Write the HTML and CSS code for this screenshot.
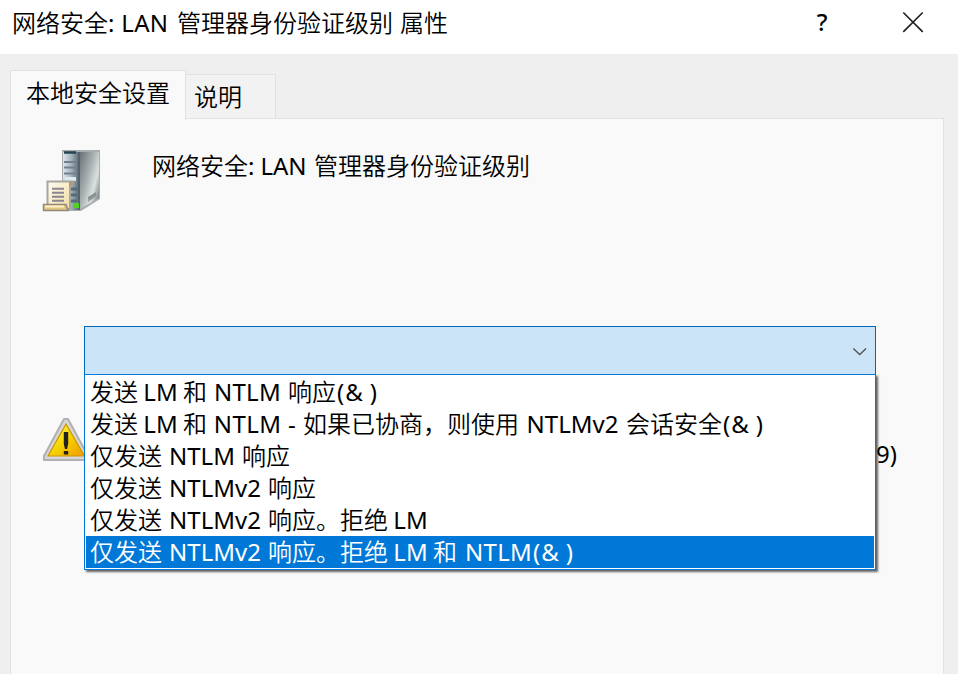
FILE: index.html
```html
<!DOCTYPE html>
<html lang="zh-CN">
<head>
<meta charset="utf-8">
<title>网络安全: LAN 管理器身份验证级别 属性</title>
<link rel="stylesheet" href="styles.css">
</head>
<body>
<div class="dialog">
  <header class="titlebar">
    <h1 class="title">网络安全<span class="run lan-title">: LAN </span>管理器身份验证级别<span class="run gap"> </span>属性</h1>
    <button class="help" aria-label="帮助">?</button>
    <button class="close" aria-label="关闭"><svg width="22" height="22" viewBox="0 0 22 22"><path d="M1.3 1.5 20.7 20.9M20.7 1.5 1.3 20.9" stroke="#222" stroke-width="1.7" fill="none"/></svg></button>
  </header>
  <nav class="tabs">
    <div class="tab active">本地安全设置</div>
    <div class="tab">说明</div>
  </nav>
  <main class="panel">
    <div class="policy">
      <svg class="server" width="60" height="64" viewBox="0 0 60 64">
        <defs>
          <linearGradient id="side" x1="0" y1="0" x2="1" y2=".8"><stop offset="0" stop-color="#697277"/><stop offset=".45" stop-color="#a8afb1"/><stop offset=".75" stop-color="#dce0e0"/><stop offset="1" stop-color="#7d8588"/></linearGradient>
          <linearGradient id="front" x1="0" y1="0" x2="1" y2="0"><stop offset="0" stop-color="#dce5ea"/><stop offset=".5" stop-color="#aab8c2"/><stop offset="1" stop-color="#627480"/></linearGradient>
          <linearGradient id="paper" x1="0" y1="0" x2="1" y2="1"><stop offset="0" stop-color="#fffdf2"/><stop offset="1" stop-color="#efd99c"/></linearGradient>
        </defs>
        <path d="M20 1H58V50L39 62H20Z" fill="#a8adaf"/>
        <path d="M38 3H57V49L38 60Z" fill="url(#side)"/>
        <path d="M21 3H36V61H21Z" fill="url(#front)"/>
        <path d="M37 3V61" stroke="#55626a" stroke-width="2"/>
        <path d="M22 3.5H34" stroke="#234353" stroke-width="2.5"/>
        <path d="M22 13H35M22 18.5H35M22 24.5H35" stroke="#71818b" stroke-width="2"/>
        <path d="M23 28H34V32H23Z" fill="#dceaf1"/>
        <path d="M28 40H35M28 46H35M28 52H35" stroke="#526c7b" stroke-width="3"/>
        <path d="M46 52 54 43V47L46 53ZM46 48 54 43V46L46 51Z" fill="#8b9293"/>
        <path d="M32 54H37V59H32Z" fill="#4ed321"/>
        <path d="M5.500 32.5H31L28 39V60H5.500Z" fill="url(#paper)" stroke="#a6a5a0" stroke-width="2"/>
        <path d="M27 33H30.500L28.500 38H27Z" fill="#bd9b5d"/>
        <path d="M10 39.800H22M10 43.800H22M10 47.800H22M10 51.800H22" stroke="#8b8591" stroke-width="2"/>
        <path d="M1.500 55.500H24L26 61.500H1.500Z" fill="#dfc681" stroke="#918a7c" stroke-width="1.5"/>
        <path d="M3 57.500H22" stroke="#fff0ca" stroke-width="2"/>
      </svg>
      <div class="policy-name">网络安全<span class="run lan-name">: LAN </span>管理器身份验证级别</div>
    </div>
    <div class="combo">
      <svg width="16" height="10" viewBox="0 0 16 10"><path d="m1.3 1.5 6.4 6 6.4-6" fill="none" stroke="#505050" stroke-width="1.3"/></svg>
      <ul class="list">
        <li>发送<span class="run w45">LM</span>和<span class="run w81">NTLM</span>响应<span class="run amp">(<i>&amp;</i>)</span></li>
        <li>发送<span class="run w45">LM</span>和<span class="run w96">NTLM -</span>如果已协商，则使用<span class="run w107">NTLMv2</span>会话安全<span class="run amp">(<i>&amp;</i>)</span></li>
        <li>仅发送<span class="run w80">NTLM</span>响应</li>
        <li>仅发送<span class="run w106">NTLMv2</span>响应</li>
        <li>仅发送<span class="run w106">NTLMv2</span>响应。拒绝<span class="run w45">LM</span></li>
        <li class="selected">仅发送<span class="run w106">NTLMv2</span>响应。拒绝<span class="run w45">LM</span>和<span class="run w75">NTLM</span><span class="run amp">(<i>&amp;</i>)</span></li>
      </ul>
    </div>
    <div class="notice">
      <svg width="48" height="46" viewBox="0 0 48 46">
        <defs><linearGradient id="gold" x1="0" y1="0" x2="1" y2="1"><stop offset=".15" stop-color="#fff04b"/><stop offset=".5" stop-color="#f5d400"/><stop offset="1" stop-color="#f09a00"/></linearGradient></defs>
        <path d="M22 2H26L46 39V43H2V39Z" fill="#d7d7d7" stroke="#b1b1b1" stroke-width="2" stroke-linejoin="round"/>
        <path d="M24 7 42.500 39H6Z" fill="url(#gold)" stroke="#cf9300" stroke-width="1.2"/>
        <path d="M21.8 15H26.2V27L25 32H23L21.8 27Z" fill="#20221c"/><rect x="21.8" y="34" width="4.4" height="3.5" fill="#29220c"/>
      </svg>
      <span class="reference">9)</span>
    </div>
  </main>
</div>
</body>
</html>
```
FILE: styles.css
```css
* { box-sizing: border-box; }
body {
  margin: 0;
  overflow: hidden;
  background: #efefef;
  color: #000;
  font: 350 24px/32px "Noto Sans CJK SC", sans-serif;
}
.dialog { display: flex; flex-direction: column; width: 958px; height: 674px; }
.titlebar { display: flex; height: 54px; padding-left: 12px; background: #fff; flex: none; }
.title { width: 794px; margin: 6px 0 0; font: inherit; white-space: nowrap; }
button { border: 0; padding: 0; background: none; color: inherit; }
.help { width: 32px; height: 44px; font: 500 24px/44px "Noto Sans", sans-serif; }
.close { width: 22px; height: 22px; margin: 11px 0 0 64px; }
svg { display: block; flex: none; }
.tabs { display: flex; align-items: flex-end; height: 65px; padding-left: 10px; flex: none; }
.tab { width: 90px; height: 45px; padding: 5px 0 0 8px; border: 1px solid #e2e2e2; border-left: 0; border-bottom: 0; background: #f2f2f2; white-space: nowrap; }
.tab.active { z-index: 1; width: 176px; height: 50px; margin-bottom: -1px; padding: 5px 0 0 15px; border-left: 1px solid #e2e2e2; background: #f9f9f9; }
.panel { flex: 1; width: 934px; margin: -1px 0 0 10px; border: 1px solid #e2e2e2; border-bottom: 0; background: #f9f9f9; }
.policy { display: flex; height: 207px; padding: 30px 0 0 31px; }
.policy-name { margin: 0 0 0 50px; white-space: nowrap; }
.combo { position: relative; display: flex; align-items: center; justify-content: flex-end; width: 792px; height: 49px; margin-left: 73px; padding-right: 7px; border: 1px solid #0067b8; background: #cce4f7; }
.combo > svg { margin-top: 2px; }
.list { position: absolute; z-index: 2; left: -1px; top: 47px; width: 792px; height: 196px; margin: 0; padding: 1px; list-style: none; background: #fff; border: 1px solid #0078d7; box-shadow: 2px 2px 2px rgba(0,0,0,.6); }
.list li { height: 32px; padding-left: 4px; white-space: nowrap; line-height: 30px; }
.list .selected { background: #0078d7; color: #fff; }
.run { display: inline-block; font-family: "Noto Sans", sans-serif; font-weight: 400; line-height: 24px; text-align: center; white-space: pre; }
.lan-title { width: 69px; letter-spacing: .3px; text-align: left; }
.lan-name { width: 66px; letter-spacing: -.1px; text-align: left; }
.gap { width: 7px; }
.w45 { width: 45px; }
.w81 { width: 81px; letter-spacing: .3px; }
.w96 { width: 96px; letter-spacing: .4px; }
.w107 { width: 107px; }
.w80 { width: 80px; }
.w106 { width: 106px; }
.w75 { width: 75px; padding-left: 8px; letter-spacing: .3px; text-align: left; }
.amp { width: 46px; padding-left: 1px; text-align: left; }
.amp i { margin: 0 7px 0 1px; font-style: normal; }
.notice { display: flex; height: 48px; margin-top: 42px; padding-left: 31px; }
.reference { margin: 21px 0 0 786px; font-family: "Noto Sans", sans-serif; font-weight: 400; }
```
